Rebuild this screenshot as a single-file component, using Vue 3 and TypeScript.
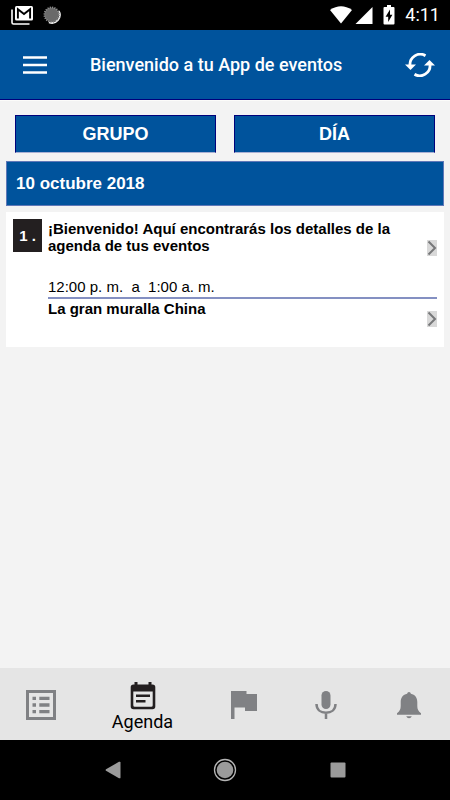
<script setup lang="ts">
import { ref } from 'vue'

interface Entry {
  text: string
  time?: string
}

const title = 'Bienvenido a tu App de eventos'
const filters: string[] = ['GRUPO', 'DÍA']
const date = '10 octubre 2018'
const welcome: Entry = {
  text: '¡Bienvenido! Aquí encontrarás los detalles de la agenda de tus eventos',
  time: '12:00 p. m.\u00a0 a\u00a0 1:00 a. m.',
}
const place: Entry = { text: 'La gran muralla China' }

type Tab = 'lista' | 'agenda' | 'bandera' | 'voz' | 'avisos'
const active = ref<Tab>('agenda')
</script>

<template>
  <div class="screen">
    <div class="status">
      <div class="status-side">
        <svg width="22" height="19" viewBox="0 0 22 19">
          <path d="M1 3.500V16.500Q1 18 2.500 18H18.500" fill="none" stroke="#fff" stroke-width="1.600" />
          <rect x="4" y="0" width="18" height="14.500" rx="1.500" fill="#fff" />
          <path d="M6.900 12.500V3.200L13 8L19.100 3.200V12.500" fill="none" stroke="#000" stroke-width="1.900" />
        </svg>
        <svg width="18" height="18" viewBox="0 0 18 18">
          <path d="M15.800 5A8 8 0 0 1 6 16.400" fill="none" stroke="#f0f0f0" stroke-width="1.800" />
          <circle cx="8.700" cy="8.700" r="7.300" fill="#6a6a6a" />
          <circle cx="8.700" cy="8.700" r="7.300" fill="none" stroke="#8c8c8c" stroke-width="1.800" stroke-dasharray="1.200 1.100" />
        </svg>
      </div>
      <div class="status-side">
        <svg width="43" height="19" viewBox="0 0 43 19">
          <path d="M0 4Q11 -3.500 22 4L11 17.500Z" fill="#fff" />
          <path d="M42.500 1V18H25.500Z" fill="#fff" />
        </svg>
        <svg width="12" height="20" viewBox="0 0 12 20">
          <path d="M4 0H8V2H10.500Q11.500 2 11.500 3V18.500Q11.500 19.500 10.500 19.500H1.500Q.5 19.500 .5 18.500V3Q.5 2 1.500 2H4Z" fill="#fff" />
          <path d="M7 4.500L2.600 11.800H5.200V17L9.400 9.700H7Z" fill="#000" />
        </svg>
        <span class="clock">4:11</span>
      </div>
    </div>

    <header class="header">
      <button type="button" aria-label="Menú">
        <svg width="24" height="18" viewBox="0 0 24 18">
          <path d="M0 1.500H24M0 9H24M0 16.500H24" stroke="#fff" stroke-width="2.600" />
        </svg>
      </button>
      <h1>{{ title }}</h1>
      <button type="button" aria-label="Actualizar">
        <svg width="30" height="24" viewBox="0 0 30 24">
          <path d="M20.500 2.700A10.300 10.300 0 0 0 5 12.500" fill="none" stroke="#fff" stroke-width="2.800" />
          <path d="M0 11.500H11L5.500 17Z" fill="#fff" />
          <path d="M9.500 21.300A10.300 10.300 0 0 0 25 11.500" fill="none" stroke="#fff" stroke-width="2.800" />
          <path d="M19 12.500H30L24.500 7Z" fill="#fff" />
        </svg>
      </button>
    </header>

    <main class="content">
      <div class="filters">
        <button v-for="f in filters" :key="f" class="filter" type="button">{{ f }}</button>
      </div>
      <h2 class="date">{{ date }}</h2>
      <section class="card">
        <span class="number">1 .</span>
        <div class="entries">
          <a class="entry first" href="#">
            <span class="entry-text">{{ welcome.text }}</span>
            <span class="arrow">
              <svg width="10" height="16" viewBox="0 0 10 16">
                <path d="M1.500 1.500L8 8L1.500 14.500" fill="none" stroke="#77787a" stroke-width="2" />
              </svg>
            </span>
          </a>
          <p class="time">{{ welcome.time }}</p>
          <a class="entry" href="#">
            <span class="entry-text">{{ place.text }}</span>
            <span class="arrow low">
              <svg width="10" height="16" viewBox="0 0 10 16">
                <path d="M1.500 1.500L8 8L1.500 14.500" fill="none" stroke="#77787a" stroke-width="2" />
              </svg>
            </span>
          </a>
        </div>
      </section>
    </main>

    <nav class="tabs">
      <button class="tab" type="button" aria-label="Lista" @click="active = 'lista'">
        <svg width="30" height="30" viewBox="0 0 30 30">
          <rect x="1.500" y="1.500" width="27" height="27" fill="none" stroke="#808184" stroke-width="3" />
          <path d="M6.500 8.300H10M6.500 15H10M6.500 21.700H10M13.300 8.300H23.500M13.300 15H23.500M13.300 21.700H23.500" stroke="#808184" stroke-width="3.300" />
        </svg>
      </button>
      <button class="tab wide" type="button" :aria-pressed="active === 'agenda'" @click="active = 'agenda'">
        <svg width="26" height="28" viewBox="0 0 26 28">
          <path fill-rule="evenodd" d="M4.500 0H7.500V2.500H18.500V0H21.500V2.500H22.500Q25.300 2.500 25.300 5.300V24.500Q25.300 27.300 22.500 27.300H3.500Q.7 27.300 .7 24.500V5.300Q.7 2.500 3.500 2.500H4.500ZM3.300 9.500V23.200Q3.300 24.700 4.800 24.700H21.200Q22.700 24.700 22.700 23.200V9.500Z" fill="#231f20" />
          <path d="M6 13.800H20M6 19.300H15.500" stroke="#231f20" stroke-width="2.500" />
        </svg>
        <span>Agenda</span>
      </button>
      <button class="tab" type="button" aria-label="Bandera" @click="active = 'bandera'">
        <svg width="26" height="30" viewBox="0 0 26 30">
          <path d="M0 1H15.500V4H26V21H14V17.500H3.500V29H0Z" fill="#808184" />
        </svg>
      </button>
      <button class="tab" type="button" aria-label="Voz" @click="active = 'voz'">
        <svg width="22" height="30" viewBox="0 0 22 30">
          <rect x="6.500" y="1" width="9" height="18" rx="4.500" fill="#808184" />
          <path d="M1.500 14C1.500 20 6 22.800 11 22.800S20.500 20 20.500 14M11 22.500V29" fill="none" stroke="#808184" stroke-width="2.500" />
        </svg>
      </button>
      <button class="tab" type="button" aria-label="Avisos" @click="active = 'avisos'">
        <svg width="26" height="28" viewBox="0 0 26 28">
          <path d="M13 1Q14.600 1 14.900 2.700C19 3.500 21.300 6.500 21.300 11V15C21.300 18.500 22.300 20 25 22.300V23.800H1V22.300C3.700 20 4.700 18.500 4.700 15V11C4.700 6.500 7 3.500 11.100 2.700Q11.400 1 13 1Z" fill="#808184" />
          <path d="M10.200 25.200H15.800Q15 27.200 13 27.200T10.200 25.200Z" fill="#808184" />
        </svg>
      </button>
    </nav>

    <div class="system">
      <button type="button" aria-label="Atrás">
        <svg width="16" height="18" viewBox="0 0 16 18">
          <path d="M1 8.200L14 .8Q15.500 .3 15.500 1.500V16.500Q15.500 17.700 14 17.200L1 9.800Q.2 9 1 8.200Z" fill="#9b9b9b" />
        </svg>
      </button>
      <button type="button" aria-label="Inicio">
        <svg width="24" height="24" viewBox="0 0 24 24">
          <circle cx="12" cy="12" r="10.500" fill="none" stroke="#b5b5b5" stroke-width="1.300" />
          <circle cx="12" cy="12" r="8.300" fill="#9b9b9b" />
        </svg>
      </button>
      <button type="button" aria-label="Recientes">
        <svg width="16" height="16" viewBox="0 0 16 16">
          <rect x=".5" y=".5" width="15" height="15" rx="1" fill="#9b9b9b" />
        </svg>
      </button>
    </div>
  </div>
</template>

<style>
body {
  margin: 0;
}
</style>

<style scoped>
.screen {
  display: flex;
  flex-direction: column;
  min-height: 100vh;
  background: #f3f3f3;
  color: #000;
  font-family: "Liberation Sans", Arial, sans-serif;
}

button {
  margin: 0;
  padding: 0;
  border: 0;
  background: none;
  font: inherit;
  color: inherit;
}

svg {
  display: block;
}

.status {
  display: flex;
  align-items: center;
  justify-content: space-between;
  height: 30px;
  padding: 0 10px 0 11px;
  background: #000;
  color: #fff;
}

.status-side {
  display: flex;
  align-items: center;
  gap: 10px;
}

.clock {
  font: 400 18px/30px Roboto, sans-serif;
}

.header {
  display: flex;
  align-items: center;
  justify-content: space-between;
  height: 69px;
  padding: 0 15px 0 23px;
  border-bottom: 1px solid #00007b;
  background: #00539c;
  color: #fff;
}

.header h1 {
  flex: 1;
  margin: 0;
  padding-left: 43px;
  font: 500 18px/24px Roboto, sans-serif;
}

.content {
  flex: 1;
  padding: 14px 6px;
  border-top: 1px solid #fcfcfa;
}

.filters {
  display: flex;
  gap: 18px;
  padding: 0 9px;
}

.filter {
  flex: 1;
  height: 38px;
  border: 1px solid #00007b;
  border-bottom-color: #a9b0d4;
  background: #00539c;
  color: #fff;
  font-size: 18px;
  font-weight: bold;
}

.date {
  margin: 8px 0 6px;
  padding: 0 9px;
  border: 1px solid #5f78b8;
  background: #00539c;
  color: #fff;
  font-size: 17px;
  line-height: 43px;
}

.card {
  display: flex;
  align-items: flex-start;
  gap: 6px;
  padding: 7px 7px 20px;
  background: #fff;
}

.number {
  width: 29px;
  background: #231f20;
  color: #fff;
  font-size: 15px;
  font-weight: bold;
  line-height: 33px;
  text-align: center;
}

.entries {
  flex: 1;
}

.entry {
  display: flex;
  justify-content: space-between;
  padding-top: 1px;
  color: inherit;
  font-size: 15px;
  font-weight: bold;
  line-height: 17px;
  text-decoration: none;
}

.first {
  min-height: 58px;
}

.entry-text {
  max-width: 350px;
}

.arrow {
  align-self: flex-start;
  margin-top: 20px;
  background: #d9d9d9;
}

.low {
  margin-top: 11px;
}

.time {
  margin: 0;
  padding-bottom: 1px;
  border-bottom: 2px solid #8490c2;
  font-size: 15px;
  line-height: 18px;
}

.tabs {
  display: flex;
  height: 72px;
  background: #e5e5e5;
}

.tab {
  display: flex;
  flex: 1;
  flex-direction: column;
  align-items: center;
  justify-content: center;
  padding-top: 2px;
}

.wide {
  flex: 0 0 120px;
  padding-top: 8px;
  font: 18px/24px Roboto, sans-serif;
}

.system {
  display: flex;
  align-items: center;
  justify-content: center;
  height: 60px;
  background: #000;
}

.system button {
  display: flex;
  flex: 0 0 25%;
  justify-content: center;
}
</style>
